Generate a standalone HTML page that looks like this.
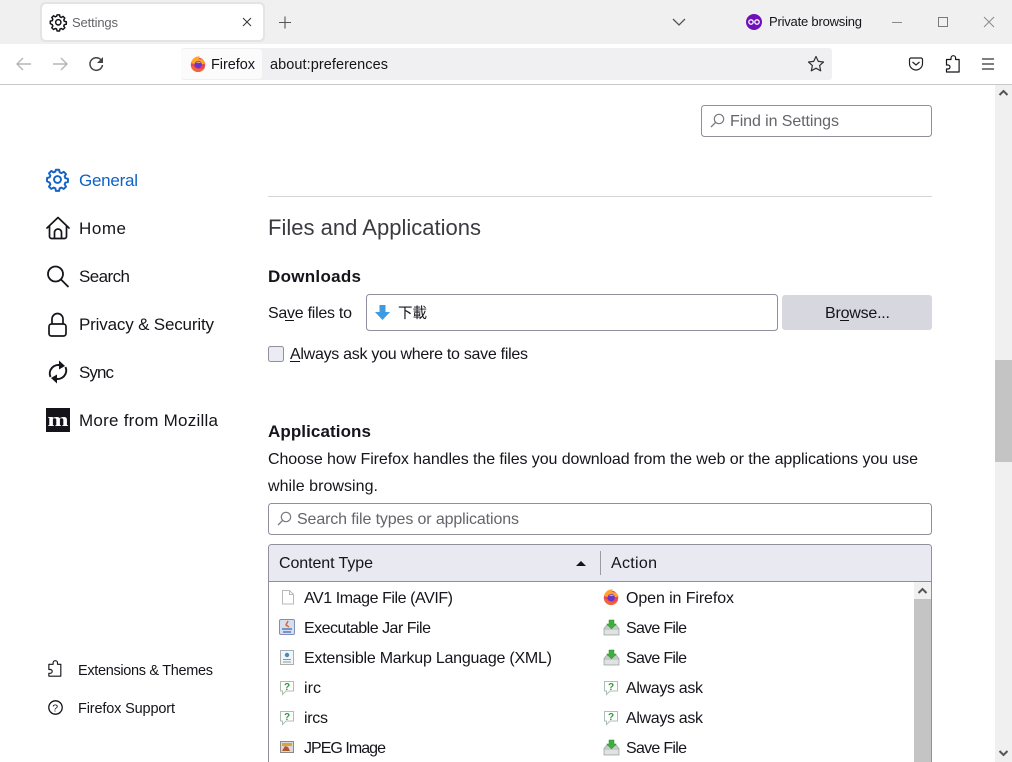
<!DOCTYPE html>
<html><head><meta charset="utf-8"><title>Settings</title>
<style>
html,body{margin:0;padding:0;background:#fff;width:1012px;height:762px;overflow:hidden}
svg{display:block}
text{font-family:"Liberation Sans","Noto Sans CJK TC",sans-serif;fill:#15141a;font-size:16px}
.s{font-size:16px}
.n{font-size:17px}
.g{fill:#65646a}
</style></head><body>
<svg width="1012" height="762" viewBox="0 0 1012 762" xmlns="http://www.w3.org/2000/svg">
<defs>
<g id="fx"><circle cx="8" cy="8.800" r="7.200" fill="#e8475a"/><path d="M.9 7C2 2.500 5.500.2 9.800.4c-.8 1-1 2-.6 2.800 2.600-.4 5.400 1 6.300 4.300L8 9z" fill="#ffa42c"/><path d="M.8 9.500c.4 3.700 3.500 6.500 7.200 6.500 3.300 0 5.900-2 7-4.800-2.400 2.200-6.500 2.600-8.800 1.100C4 11 2.800 9.600.8 9.500z" fill="#f0663a"/><circle cx="8.200" cy="8.600" r="3.700" fill="#6a35c9"/><path d="M5.800 6.200c1.600-1.100 3.800-.7 5.200.8-1.600-.2-3.600 0-5.200-.8z" fill="#ffbd3f"/></g>
<g id="save"><path d="M1 9.500 3.500 6.500h10l2.500 3v6.500H1z" fill="#c4cbc8" stroke="#9aa3a0" stroke-width=".7"/><rect x="1.500" y="11" width="14" height="4.500" fill="#dfe4e2"/><path d="M6 1h5v4h2.500L8.500 10 3.500 5H6z" fill="#3fae3c" stroke="#2c8a2c" stroke-width=".5"/></g>
<g id="ask"><path d="M1.500 1.500h13v9.500H7l-3.500 3.500V11h-2z" fill="#fff" stroke="#aebfb2" stroke-width="1"/><text x="5" y="9.800" style="font-size:10px;font-weight:bold;fill:#2e9a37">?</text></g>
<g id="gear"><path d="M8.600 1.500h2.800l.5 2.300 1.500.7 2-1.200 2 2-1.200 2 .6 1.500 2.300.6v2.800l-2.300.5-.6 1.500 1.200 2-2 2-2-1.200-1.500.6-.5 2.300H8.600l-.5-2.300-1.500-.6-2 1.200-2-2 1.200-2-.6-1.500L.9 11.500V8.700l2.300-.6.6-1.500-1.200-2 2-2 2 1.200 1.500-.7z" fill="none" stroke="currentColor" stroke-width="1.700" stroke-linejoin="round"/><circle cx="10" cy="10" r="3" fill="none" stroke="currentColor" stroke-width="1.700"/></g>
<path id="puz" d="M7.500 4.500V3a2.300 2.300 0 0 1 4.600 0v1.500h3.500V17H3v-3h1.500a2 2 0 0 0 0-4H3V4.500z" fill="none" stroke="#15141a" stroke-width="1.200" stroke-linejoin="round"/>
<g id="mag"><circle cx="9" cy="6" r="4.700" fill="none" stroke="#7a797f" stroke-width="1.200"/><path d="M5.600 9.400 1 14" stroke="#7a797f" stroke-width="1.300" fill="none"/></g>
</defs>

<!-- chrome -->
<rect width="1012" height="44" fill="#f0f0f0"/>
<rect x="0" y="44" width="1012" height="40" fill="#fff"/>
<rect x="0" y="84" width="1012" height="1" fill="#c9c9c9"/>
<rect x="40" y="2" width="225" height="40" rx="5" fill="#e4e4e8"/>
<rect x="42" y="4" width="221" height="36" rx="4" fill="#fff"/>
<g transform="translate(49.500 13.500) scale(.88)" color="#15141a"><use href="#gear"/></g>
<text x="72" y="27" style="font-size:13px" class="g" textLength="46">Settings</text>
<path d="M243 18l8 8M251 18l-8 8" stroke="#333" stroke-width="1"/>
<path d="M285 16.500v12M279 22.500h12" stroke="#555" stroke-width="1.100"/>
<path d="M673 19l6 6 6-6" fill="none" stroke="#555" stroke-width="1.300"/>
<circle cx="754" cy="22" r="8" fill="#6f10b8"/>
<circle cx="751" cy="22" r="2.200" fill="none" stroke="#fff" stroke-width="1.300"/><circle cx="757" cy="22" r="2.200" fill="none" stroke="#fff" stroke-width="1.300"/>
<text x="769" y="26" style="font-size:13px" textLength="93">Private browsing</text>
<rect x="892" y="22" width="10" height="1" fill="#8a8a8a"/>
<rect x="938.500" y="17.500" width="9" height="9" fill="none" stroke="#7a7a7a"/>
<path d="M984 17l10 10M994 17l-10 10" stroke="#8a8a8a" stroke-width="1"/>

<path d="M31 64H17M23 58l-6 6 6 6" fill="none" stroke="#b5b5b8" stroke-width="1.400"/>
<path d="M53 64h14M61 58l6 6-6 6" fill="none" stroke="#b5b5b8" stroke-width="1.400"/>
<path d="M101.500 60.500a6.300 6.300 0 1 0 1 4.500" fill="none" stroke="#444" stroke-width="1.500"/><path d="M103 57v6h-6z" fill="#444"/>
<rect x="181" y="48" width="651" height="32" rx="3" fill="#f0f0f2"/>
<rect x="181" y="49" width="81" height="30" rx="3" fill="#fbfbfb"/>
<use href="#fx" x="190" y="56"/>
<text x="211" y="69" style="font-size:14.500px" textLength="44">Firefox</text>
<text x="270" y="69" style="font-size:14.500px" textLength="118">about:preferences</text>
<path d="M816 56.500l2.300 4.900 5.200.6-3.900 3.600 1.100 5.200-4.700-2.600-4.700 2.600 1.100-5.200-3.900-3.600 5.200-.6z" fill="none" stroke="#333" stroke-width="1.200" stroke-linejoin="round"/>
<path d="M909.500 59.500a1.500 1.500 0 0 1 1.500-1.500h10a1.500 1.500 0 0 1 1.500 1.500v4a6.500 6.500 0 0 1-13 0z" fill="none" stroke="#222" stroke-width="1.200"/><path d="M912.500 62l3.500 3 3.500-3" fill="none" stroke="#222" stroke-width="1.200"/>
<use href="#puz" x="943.500" y="55"/>
<path d="M982 59h12M982 64h12M982 69h12" stroke="#333" stroke-width="1.200"/>

<!-- page scrollbar -->
<rect x="995" y="85" width="17" height="677" fill="#f0f0f0"/>
<rect x="995" y="360" width="17" height="102" fill="#c4c4c4"/>
<path d="M999.500 95l4-4 4 4" fill="none" stroke="#555" stroke-width="2"/>
<path d="M999.500 751l4 4 4-4" fill="none" stroke="#555" stroke-width="2"/>

<!-- find -->
<rect x="701.500" y="105.500" width="230" height="31" rx="3" fill="#fff" stroke="#8f8f9d"/>
<use href="#mag" x="710" y="113"/>
<text x="730" y="126" class="s g" textLength="109">Find in Settings</text>

<!-- sidebar -->
<g transform="translate(46 168) scale(1.150)" color="#1464c8"><use href="#gear"/></g>
<text x="79" y="186" class="n" style="fill:#0f62c4" textLength="59">General</text>
<path d="M47 228l11-10.500L69 228M49.500 226v10.500a2 2 0 0 0 2 2h13a2 2 0 0 0 2-2V226M54.500 238.500v-6a3.500 3.500 0 0 1 7 0v6" fill="none" stroke="#15141a" stroke-width="1.700" stroke-linejoin="round" stroke-linecap="round"/>
<text x="79" y="234" class="n" textLength="47">Home</text>
<circle cx="55.500" cy="274" r="7.500" fill="none" stroke="#15141a" stroke-width="1.800"/><path d="M61 279.500l7.500 7.500" stroke="#15141a" stroke-width="1.800"/>
<text x="79" y="282" class="n" textLength="51">Search</text>
<rect x="49" y="324" width="17" height="12" rx="2.500" fill="none" stroke="#15141a" stroke-width="1.700"/><path d="M52 324v-5a5.500 5.500 0 0 1 11 0v5" fill="none" stroke="#15141a" stroke-width="1.700"/>
<text x="79" y="330" class="n" textLength="135">Privacy &amp; Security</text>
<path d="M50.500 377a8.500 8.500 0 0 1 10.500-11.500M65.500 367a8.500 8.500 0 0 1-10.500 11.500" fill="none" stroke="#15141a" stroke-width="2"/><path d="M59 360.500l6 5.500-6 3.500zM57 383.500l-6-5.500 6-3.500z" fill="#15141a"/>
<text x="79" y="378" class="n" textLength="35">Sync</text>
<rect x="46" y="408" width="24" height="24" fill="#15141a"/>
<text x="47.500" y="426" style="font-size:19px;font-weight:bold;fill:#fff;font-family:'Liberation Serif',serif" textLength="21" lengthAdjust="spacingAndGlyphs">m</text>
<text x="79" y="426" class="n" textLength="139">More from Mozilla</text>
<use href="#puz" transform="translate(46 660) scale(.95)"/>
<text x="78" y="675" style="font-size:14.500px" textLength="135">Extensions &amp; Themes</text>
<circle cx="55.500" cy="707.500" r="6.700" fill="none" stroke="#15141a" stroke-width="1.300"/>
<text x="52.300" y="711.500" style="font-size:10.500px">?</text>
<text x="78" y="713" style="font-size:14.500px" textLength="97">Firefox Support</text>

<!-- content -->
<rect x="268" y="196" width="664" height="1" fill="#d4d4d6"/>
<text x="268" y="235" style="font-size:22px;fill:#3a3a40" textLength="213">Files and Applications</text>
<text x="268" y="282" style="font-size:17px;font-weight:bold" textLength="93">Downloads</text>
<text x="268" y="318" class="s" textLength="84">Save files to</text>
<rect x="285" y="320" width="9" height="1" fill="#15141a"/>
<rect x="366.500" y="294.500" width="411" height="36" rx="3" fill="#fff" stroke="#8f8f9d"/>
<path d="M379.500 305h6v7h4.500l-7.500 8-7.500-8h4.500z" fill="#3d9be3"/>
<text x="398" y="318" style="font-size:14.500px" textLength="29">下載</text>
<rect x="782" y="295" width="150" height="35" rx="3" fill="#d7d7df"/>
<text x="825" y="318" class="s" textLength="65">Browse...</text>
<rect x="840" y="320" width="9" height="1" fill="#15141a"/>
<rect x="268.500" y="346.500" width="15" height="15" rx="2" fill="#ebebf3" stroke="#8f8f9d"/>
<text x="290" y="359" class="s" textLength="238">Always ask you where to save files</text>
<rect x="290" y="361" width="10" height="1" fill="#15141a"/>
<text x="268" y="437" style="font-size:17px;font-weight:bold" textLength="103">Applications</text>
<text x="268" y="464" class="s" textLength="650">Choose how Firefox handles the files you download from the web or the applications you use</text>
<text x="268" y="491" class="s" textLength="110">while browsing.</text>
<rect x="268.500" y="503.500" width="663" height="31" rx="3" fill="#fff" stroke="#8f8f9d"/>
<use href="#mag" x="277" y="511"/>
<text x="297" y="524" class="s g" textLength="222">Search file types or applications</text>

<!-- table -->
<path d="M268.500 762V547.500a3 3 0 0 1 3-3h657a3 3 0 0 1 3 3V762" fill="#fff" stroke="#8f8f9d"/>
<path d="M269 581V548a3 3 0 0 1 3-3h656a3 3 0 0 1 3 3v33z" fill="#e9e9f2"/>
<rect x="269" y="581" width="662" height="1" fill="#8f8f9d"/>
<text x="279" y="568" class="s" textLength="94">Content Type</text>
<path d="M576 566l5-5 5 5z" fill="#15141a"/>
<rect x="600" y="551" width="1" height="24" fill="#9a9aa5"/>
<text x="611" y="568" class="s" textLength="46">Action</text>
<rect x="914" y="582" width="17" height="180" fill="#f0f0f0"/>
<rect x="914" y="599" width="17" height="163" fill="#c4c4c4"/>
<path d="M918.500 593l4-4 4 4" fill="none" stroke="#555" stroke-width="2"/>

<path d="M282.500 590.500h7l4 4v9.500h-11z" fill="#fff" stroke="#b9b9b9"/><path d="M289.500 590.500v4h4" fill="none" stroke="#b9b9b9"/>
<text x="304" y="603" class="s" textLength="149">AV1 Image File (AVIF)</text>
<rect x="279.500" y="619.500" width="15" height="15" rx="1.500" fill="#d6def0" stroke="#7f8fb5"/><path d="M288 621l-2 4 3 2" fill="none" stroke="#e0662a" stroke-width="1.500"/><path d="M282 629h10M283 632h8" stroke="#3b6ab5" stroke-width="1.200"/>
<text x="304" y="633" class="s" textLength="127">Executable Jar File</text>
<path d="M280.500 650.500h13v14h-13z" fill="#f2f5f4" stroke="#a7b0ae"/><circle cx="287" cy="655" r="2.200" fill="#3a8fc9"/><path d="M283 659.500h8M283 662h8" stroke="#8a9a98"/>
<text x="304" y="663" class="s" textLength="248">Extensible Markup Language (XML)</text>
<use href="#ask" x="279" y="680"/>
<text x="304" y="693" class="s" textLength="17">irc</text>
<use href="#ask" x="279" y="710"/>
<text x="304" y="723" class="s" textLength="24">ircs</text>
<rect x="280.500" y="741.500" width="13" height="11" fill="#d9d9d9" stroke="#8a8a8a"/><path d="M282 751l3-5 3 1 2 4z" fill="#b5532a"/><rect x="282" y="743" width="10" height="3" fill="#e0a13a"/>
<text x="304" y="753" class="s" textLength="82">JPEG Image</text>

<use href="#fx" x="603" y="589"/>
<text x="626" y="603" class="s" textLength="108">Open in Firefox</text>
<use href="#save" x="603" y="619"/>
<text x="626" y="633" class="s" textLength="61">Save File</text>
<use href="#save" x="603" y="649"/>
<text x="626" y="663" class="s" textLength="61">Save File</text>
<use href="#ask" x="603" y="680"/>
<text x="626" y="693" class="s" textLength="77">Always ask</text>
<use href="#ask" x="603" y="710"/>
<text x="626" y="723" class="s" textLength="77">Always ask</text>
<use href="#save" x="603" y="739"/>
<text x="626" y="753" class="s" textLength="61">Save File</text>
</svg>
</body></html>
